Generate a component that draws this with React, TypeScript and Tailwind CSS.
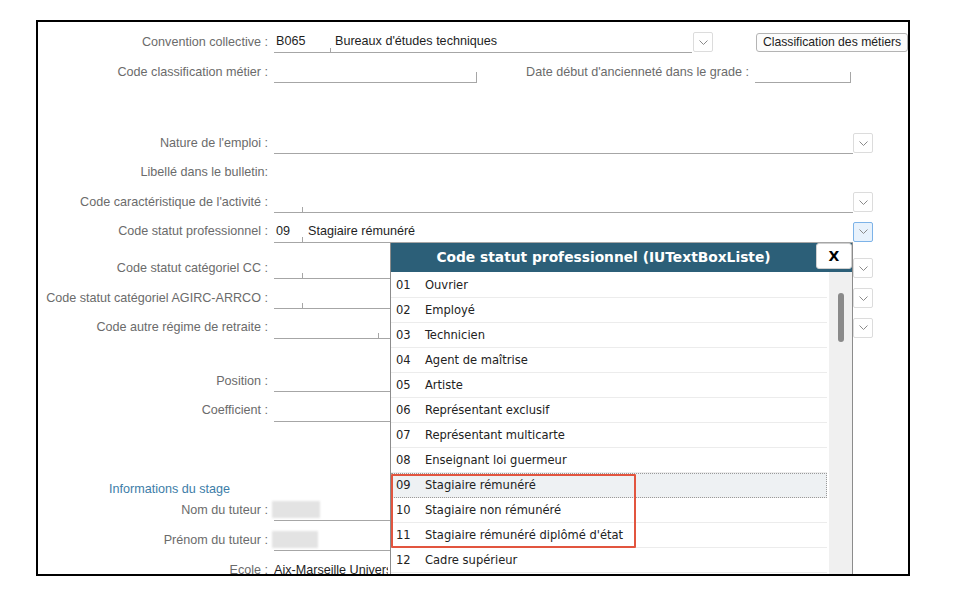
import { ReactNode } from 'react'

const rows = [
  ['01', 'Ouvrier'],
  ['02', 'Employé'],
  ['03', 'Technicien'],
  ['04', 'Agent de maîtrise'],
  ['05', 'Artiste'],
  ['06', 'Représentant exclusif'],
  ['07', 'Représentant multicarte'],
  ['08', 'Enseignant loi guermeur'],
  ['09', 'Stagiaire rémunéré'],
  ['10', 'Stagiaire non rémunéré'],
  ['11', "Stagiaire rémunéré diplômé d'état"],
  ['12', 'Cadre supérieur'],
]

function Chevron({ active = false }: { active?: boolean }) {
  return (
    <div
      className={`flex h-[20px] w-[20px] shrink-0 items-center justify-center rounded-[2px] border ${
        active ? 'border-[#7db3e8] bg-[#e8f2fc]' : 'border-[#dcdcdc] bg-white'
      }`}
    >
      <svg width="9" height="5" viewBox="0 0 9 5">
        <polyline points="0.5,0.5 4.5,4.5 8.5,0.5" fill="none" stroke="#8a8a8a" strokeWidth="1" />
      </svg>
    </div>
  )
}

function Row({ label, className = 'h-[30px]', children }: { label: string; className?: string; children?: ReactNode }) {
  return (
    <div className={`flex items-center ${className}`}>
      <div className="w-[230px] shrink-0 whitespace-nowrap text-right text-[#6b6b6b]">{label}</div>
      <div className="ml-[6px] flex items-center">{children}</div>
    </div>
  )
}

// ligne de saisie : juste un trait en bas
function Field({ className = '', children }: { className?: string; children?: ReactNode }) {
  return (
    <div className={`relative flex h-[22px] shrink-0 items-center whitespace-nowrap border-b border-[#a6a6a6] text-[#1e1e1e] ${className}`}>
      {children}
    </div>
  )
}

export default function App() {
  return (
    <div className="h-[609px] w-[958px] overflow-hidden bg-white pt-[20px] pl-[36px] font-['Liberation_Sans',Arial,sans-serif] text-[12.6px]">
      <div className="relative h-[556px] w-[874px] overflow-hidden border-2 border-black pt-[5px]">
        <Row label="Convention collective :">
          <Field className="w-[56px] pl-[2px]">B065</Field>
          <Field className="w-[362px] pl-[5px]">
            <span className="absolute bottom-0 left-0 h-[4px] w-px bg-[#a6a6a6]" />
            Bureaux d&apos;études techniques
          </Field>
          <div className="ml-px">
            <Chevron />
          </div>
          <button className="ml-[43px] h-[19px] w-[152px] rounded-[3px] border border-[#b4b4b4] bg-[#fcfcfc] text-[12.2px] leading-none text-[#222]">
            Classification des métiers
          </button>
        </Row>
        <Row label="Code classification métier :">
          <Field className="w-[203px]">
            <span className="absolute bottom-0 right-0 h-[10px] w-px bg-[#a6a6a6]" />
          </Field>
          <div className="w-[272px] whitespace-nowrap text-right text-[#6b6b6b]">Date début d&apos;ancienneté dans le grade :</div>
          <Field className="ml-[6px] w-[96px]">
            <span className="absolute bottom-0 right-0 h-[10px] w-px bg-[#a6a6a6]" />
          </Field>
        </Row>

        <div className="h-[41px]" />

        <Row label="Nature de l'emploi :">
          <Field className="w-[579px]" />
          <Chevron />
        </Row>
        <Row label="Libellé dans le bulletin:" className="h-[29px]" />
        <Row label="Code caractéristique de l'activité :">
          <Field className="w-[579px]">
            <span className="absolute bottom-0 left-[28px] h-[5px] w-px bg-[#a6a6a6]" />
          </Field>
          <Chevron />
        </Row>
        <Row label="Code statut professionnel :" className="h-[29px]">
          <Field className="w-[579px]">
            <span className="absolute bottom-0 left-[28px] h-[5px] w-px bg-[#a6a6a6]" />
            <span className="w-[28px] pl-[2px]">09</span>
            <span className="pl-[6px]">Stagiaire rémunéré</span>
          </Field>
          <Chevron active />
        </Row>

        <div className="h-[7px]" />

        <Row label="Code statut catégoriel CC :">
          <Field className="w-[579px]">
            <span className="absolute bottom-0 left-[28px] h-[5px] w-px bg-[#a6a6a6]" />
          </Field>
          <Chevron />
        </Row>
        <Row label="Code statut catégoriel AGIRC-ARRCO :">
          <Field className="w-[579px]">
            <span className="absolute bottom-0 left-[28px] h-[5px] w-px bg-[#a6a6a6]" />
          </Field>
          <Chevron />
        </Row>
        <Row label="Code autre régime de retraite :" className="h-[29px]">
          <Field className="w-[579px]">
            <span className="absolute bottom-0 left-[104px] h-[5px] w-px bg-[#a6a6a6]" />
          </Field>
          <Chevron />
        </Row>

        <div className="h-[24px]" />

        <Row label="Position :">
          <Field className="w-[300px]" />
        </Row>
        <Row label="Coefficient :" className="h-[29px]">
          <Field className="w-[300px]" />
        </Row>

        <div className="h-[56px]" />

        <div className="flex h-[16px] items-center pl-[71px] text-[#3d7da8]">Informations du stage</div>
        <Row label="Nom du tuteur :" className="h-[26px]">
          <Field className="w-[300px]">
            <div className="-ml-[2px] h-[17px] w-[48px] bg-[#e3e3e3] blur-[1px]" />
          </Field>
        </Row>
        <Row label="Prénom du tuteur :" className="h-[34px]">
          <Field className="w-[300px]">
            <div className="-ml-[2px] h-[17px] w-[46px] bg-[#e3e3e3] blur-[1px]" />
          </Field>
        </Row>
        <Row label="Ecole :" className="h-[26px]">
          <div className="w-[114px] overflow-hidden whitespace-nowrap text-[#1e1e1e]">Aix-Marseille Université</div>
        </Row>

        {/* liste déroulante ouverte par-dessus le formulaire */}
        <div className="absolute left-[352px] top-[221px] flex h-[360px] w-[463px] flex-col border-x border-[#8c8c8c] bg-white font-['DejaVu_Sans_Condensed','DejaVu_Sans',sans-serif]">
          <div className="flex h-[29px] shrink-0 items-start bg-[#2c5f78]">
            <div className="flex h-full flex-1 items-center justify-center font-['DejaVu_Sans',sans-serif] text-[13.8px] font-bold text-white">
              Code statut professionnel (IUTextBoxListe)
            </div>
            <button className="h-[26px] w-[36px] rounded-[3px] border border-[#d0d0d0] bg-white font-['DejaVu_Sans',sans-serif] text-[14px] font-bold text-black">
              X
            </button>
          </div>
          <div className="flex flex-1">
            <div className="relative flex-1 pt-px pr-[2px]">
              {rows.map(([code, name]) => (
                <div
                  key={code}
                  className={`flex h-[25px] items-center border-b border-[#ececec] text-[12.8px] text-[#222] ${
                    code === '09' ? 'bg-[#eef1f3] outline-1 -outline-offset-1 outline-dotted outline-[#9a9a9a]' : ''
                  }`}
                >
                  <span className="w-[34px] pl-[5px]">{code}</span>
                  <span>{name}</span>
                </div>
              ))}
              <div className="pointer-events-none absolute left-0 top-[202px] h-[74px] w-[245px] rounded-[1px] border-2 border-[#e2553f]" />
            </div>
            <div className="w-[23px] shrink-0 bg-[#f0f0f0] pt-[21px]">
              <div className="mx-auto h-[49px] w-[6px] rounded-full bg-[#8a8a8a]" />
            </div>
          </div>
        </div>
      </div>
    </div>
  )
}
